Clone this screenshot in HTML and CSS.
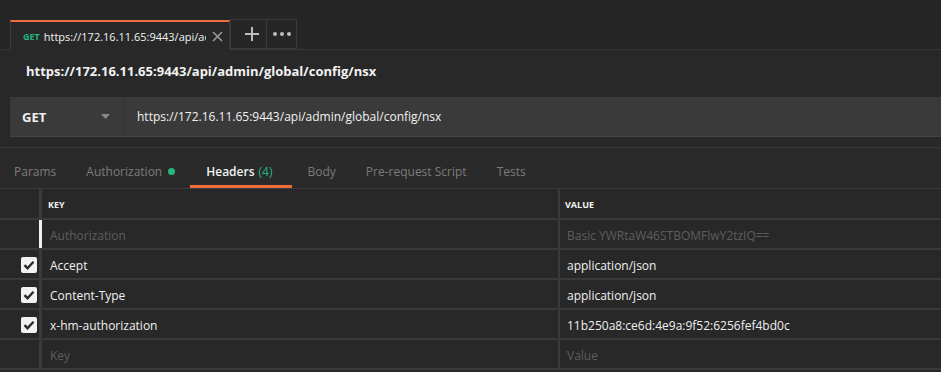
FILE: index.html
```html
<!DOCTYPE html>
<html lang="en">
<head>
    <meta charset="UTF-8">
    <title>Postman - Headers</title>
    <link rel="stylesheet" href="styles.css">
</head>
<body>
    <div class="tabbar">
        <div class="tab active">
            <span class="tab-method">GET</span>
            <span class="tab-url">https://172.16.11.65:9443/api/admin/global/config/nsx</span>
            <svg class="tab-close" width="11" height="11" viewBox="0 0 11 11"><path d="M1 1l9 9M10 1l-9 9" stroke="#9a9a9a" stroke-width="1.6"/></svg>
        </div>
        <div class="tab-btn plus">
            <svg width="14" height="14" viewBox="0 0 14 14"><path d="M7 0v14M0 7h14" stroke="#bdbdbd" stroke-width="2"/></svg>
        </div>
        <div class="tab-btn">
            <svg width="18" height="4" viewBox="0 0 18 4"><circle cx="2" cy="2" r="2" fill="#bdbdbd"/><circle cx="9" cy="2" r="2" fill="#bdbdbd"/><circle cx="16" cy="2" r="2" fill="#bdbdbd"/></svg>
        </div>
    </div>

    <div class="title">https://172.16.11.65:9443/api/admin/global/config/nsx</div>

    <div class="request">
        <div class="method">
            <span>GET</span>
            <svg width="9" height="5" viewBox="0 0 9 5"><path d="M0 0h9L4.5 5z" fill="#8a8a8a"/></svg>
        </div>
        <div class="url">https://172.16.11.65:9443/api/admin/global/config/nsx</div>
    </div>

    <div class="nav">
        <div class="nav-item">Params</div>
        <div class="nav-item">Authorization <span class="dot"></span></div>
        <div class="nav-item current">Headers <span class="count">(4)</span></div>
        <div class="nav-item">Body</div>
        <div class="nav-item">Pre-request Script</div>
        <div class="nav-item">Tests</div>
    </div>

    <div class="table">
        <div class="row head">
            <div class="cell check"></div>
            <div class="cell key">KEY</div>
            <div class="cell value">VALUE</div>
        </div>
        <div class="row">
            <div class="cell check"></div>
            <div class="cell key focused muted">Authorization</div>
            <div class="cell value muted">Basic YWRtaW46STBOMFlwY2tzIQ==</div>
        </div>
        <div class="row">
            <div class="cell check"><span class="box"><svg width="12" height="10" viewBox="0 0 12 10"><path d="M1.5 5.2l3 3 6-6.5" fill="none" stroke="#2a2a2a" stroke-width="2.4"/></svg></span></div>
            <div class="cell key">Accept</div>
            <div class="cell value">application/json</div>
        </div>
        <div class="row">
            <div class="cell check"><span class="box"><svg width="12" height="10" viewBox="0 0 12 10"><path d="M1.5 5.2l3 3 6-6.5" fill="none" stroke="#2a2a2a" stroke-width="2.4"/></svg></span></div>
            <div class="cell key">Content-Type</div>
            <div class="cell value">application/json</div>
        </div>
        <div class="row">
            <div class="cell check"><span class="box"><svg width="12" height="10" viewBox="0 0 12 10"><path d="M1.5 5.2l3 3 6-6.5" fill="none" stroke="#2a2a2a" stroke-width="2.4"/></svg></span></div>
            <div class="cell key">x-hm-authorization</div>
            <div class="cell value">11b250a8:ce6d:4e9a:9f52:6256fef4bd0c</div>
        </div>
        <div class="row">
            <div class="cell check"></div>
            <div class="cell key muted">Key</div>
            <div class="cell value muted">Value</div>
        </div>
    </div>
</body>
</html>
```

FILE: styles.css
```css
body {
    margin: 0;
    font-family: "Open Sans", sans-serif;
    background-color: #282828;
    color: #e8e8e8;
    overflow: hidden;
}
.tabbar {
    height: 50px;
    display: flex;
    align-items: flex-end;
    padding-left: 10px;
    background-color: #262626;
    border-bottom: 1px solid #363636;
    box-sizing: border-box;
}
.tab {
    width: 220px;
    height: 30px;
    box-sizing: border-box;
    display: flex;
    align-items: center;
    padding: 1px 6px 0 12px;
    border-left: 1px solid #3a3a3a;
    border-right: 1px solid #3a3a3a;
    margin-bottom: -1px;
}
.tab.active {
    background-color: #282828;
    border-top: 2px solid #f26b3a;
}
.tab-method {
    color: #26b47f;
    font-size: 9px;
    font-weight: bold;
    margin-right: 4px;
}
.tab-url {
    flex: 1;
    font-size: 11px;
    color: #f2f2f2;
    white-space: nowrap;
    overflow: hidden;
}
.tab-close {
    margin-left: 6px;
    flex-shrink: 0;
}
.tab-btn {
    width: 30px;
    height: 30px;
    box-sizing: border-box;
    border: 1px solid #3a3a3a;
    border-left: none;
    display: flex;
    align-items: center;
    justify-content: center;
}
.tab-btn.plus {
    width: 37px;
    border-left: 1px solid #3a3a3a;
    padding-left: 6px;
}
.title {
    height: 40px;
    line-height: 42px;
    padding-left: 26px;
    font-size: 13px;
    font-weight: bold;
    color: #f2f2f2;
}
.request {
    display: flex;
    height: 39px;
    margin: 7px 0 0 10px;
    background-color: #3a3a3a;
    border-bottom: 1px solid #444;
}
.method {
    width: 115px;
    box-sizing: border-box;
    padding: 0 14px 0 12px;
    display: flex;
    align-items: center;
    justify-content: space-between;
    border-right: 1px solid #333;
    font-size: 13px;
    font-weight: bold;
    color: #f2f2f2;
}
.url {
    padding-left: 12px;
    display: flex;
    align-items: center;
    font-size: 12px;
    color: #f2f2f2;
}
.nav {
    display: flex;
    margin-top: 10px;
    border-top: 1px solid #363636;
    border-bottom: 1px solid #3a3a3a;
    background-color: #2a2a2a;
    box-sizing: border-box;
    height: 42px;
}
.nav-item {
    padding: 9px 15px 0;
    display: flex;
    align-items: center;
    font-size: 12px;
    color: #7c7c7c;
    box-sizing: border-box;
    border-bottom: 3px solid transparent;
}
.nav-item:first-child {
    padding-left: 14px;
}
.nav-item.current {
    padding-left: 16px;
    padding-right: 20px;
    color: #f2f2f2;
    font-weight: 600;
    border-bottom-color: #f26b3a;
}
.dot {
    width: 7px;
    height: 7px;
    border-radius: 50%;
    background-color: #26b47f;
    margin-left: 6px;
}
.count {
    color: #26b47f;
    font-weight: normal;
    margin-left: 4px;
}
.row {
    display: flex;
    height: 30px;
    box-sizing: border-box;
    border-bottom: 2px solid #3a3a3a;
}
.row.head {
    height: 31px;
}
.cell {
    display: flex;
    align-items: center;
    padding-top: 2px;
    font-size: 12px;
    color: #f0f0f0;
    box-sizing: border-box;
}
.check {
    width: 42px;
    border-right: 3px solid #3a3a3a;
    justify-content: flex-end;
    padding-right: 2px;
}
.key {
    width: 518px;
    padding-left: 8px;
    border-right: 2px solid #3a3a3a;
}
.value {
    flex: 1;
    padding-left: 7px;
}
.head .cell {
    font-size: 9px;
    font-weight: bold;
    color: #f2f2f2;
}
.head .key {
    padding-left: 6px;
}
.head .value {
    padding-left: 5px;
}
.muted {
    color: #5e5e5e;
}
.focused {
    border-left: 3px solid #f0f0f0;
    margin-left: -3px;
    padding-left: 8px;
    width: 521px;
}
.box {
    width: 16px;
    height: 16px;
    border-radius: 2px;
    background-color: #f2f2f2;
    display: flex;
    align-items: center;
    justify-content: center;
}
```
